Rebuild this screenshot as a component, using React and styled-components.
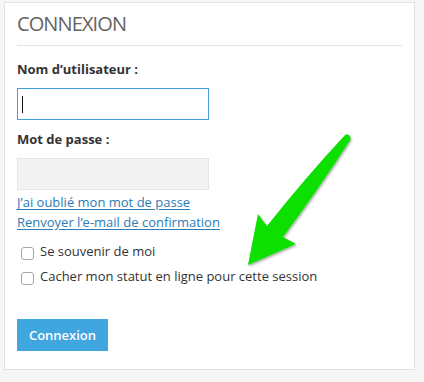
import React from "react";
import styled, { createGlobalStyle } from "styled-components";

const GlobalStyle = createGlobalStyle`
  html, body {
    margin: 0;
    padding: 0;
    background: #f6f6f6;
    font-family: "Open Sans", "Liberation Sans", sans-serif;
    color: #333;
  }
`;

const Page = styled.div`
  position: relative;
  width: 424px;
  height: 382px;
  padding: 2px 0 0 4px;
  box-sizing: border-box;
`;

const Card = styled.form`
  width: 411px;
  height: 368px;
  box-sizing: border-box;
  background: #fff;
  border: 1px solid #e2e2e2;
  padding: 8px 12px 0 12px;
  display: flex;
  flex-direction: column;
`;

const Title = styled.h2`
  margin: 0;
  font-size: 20px;
  font-weight: 400;
  line-height: 26px;
  letter-spacing: -0.9px;
  color: #636363;
  padding-bottom: 8px;
  border-bottom: 1px solid #e3e3e3;
`;

const Field = styled.div`
  display: flex;
  flex-direction: column;
  margin-top: ${(p) => p.$top}px;
`;

const Label = styled.label`
  font-size: 13px;
  font-weight: 700;
  line-height: 18px;
  color: #333;
`;

const Input = styled.div`
  width: 192px;
  height: 32px;
  box-sizing: border-box;
  margin-top: 10px;
  border: 1px solid ${(p) => (p.$focused ? "#3fa0dc" : "#e6e6e6")};
  background: ${(p) => (p.$focused ? "#fff" : "#f3f3f3")};
  display: flex;
  align-items: center;
  padding-left: 4px;
`;

const Caret = styled.span`
  width: 1px;
  height: 17px;
  background: #111;
`;

const Links = styled.div`
  display: flex;
  flex-direction: column;
  margin-top: 2px;
`;

const TextLink = styled.a`
  font-size: 13px;
  line-height: 20px;
  color: #2b7cb5;
  text-decoration: underline;
  text-underline-offset: 2px;
`;

const Options = styled.div`
  display: flex;
  flex-direction: column;
  gap: 7px;
  margin-top: 10px;
  padding-left: 4px;
`;

const Option = styled.label`
  display: flex;
  align-items: center;
  gap: 6px;
  font-size: 13px;
  line-height: 18px;
  color: #333;
`;

const Box = styled.span`
  width: 11px;
  height: 11px;
  margin-top: 4px;
  border: 1px solid #a8a8a8;
  border-radius: 3px;
  background: #fff;
  flex-shrink: 0;
`;

const Button = styled.button`
  margin-top: 34px;
  align-self: flex-start;
  width: 91px;
  height: 32px;
  border: none;
  background: #3fa6e0;
  color: #fff;
  font-family: "Open Sans", "Liberation Sans", sans-serif;
  font-size: 13px;
  font-weight: 600;
  padding: 0;
`;

const Arrow = styled.svg`
  position: absolute;
  left: 0;
  top: 0;
  pointer-events: none;
`;

export default function App() {
  return (
    <Page>
      <GlobalStyle />
      <Card onSubmit={(e) => e.preventDefault()}>
        <Title>CONNEXION</Title>
        <Field $top={14}>
          <Label>Nom d’utilisateur :</Label>
          <Input $focused>
            <Caret />
          </Input>
        </Field>
        <Field $top={10}>
          <Label>Mot de passe :</Label>
          <Input />
        </Field>
        <Links>
          <TextLink href="#">J’ai oublié mon mot de passe</TextLink>
          <TextLink href="#">Renvoyer l’e-mail de confirmation</TextLink>
        </Links>
        <Options>
          <Option>
            <Box />
            Se souvenir de moi
          </Option>
          <Option>
            <Box />
            Cacher mon statut en ligne pour cette session
          </Option>
        </Options>
        <Button type="submit">Connexion</Button>
      </Card>
      <Arrow width="424" height="382" viewBox="0 0 424 382">
        <defs>
          <filter id="sh" x="-20%" y="-20%" width="140%" height="140%">
            <feDropShadow dx="1" dy="1.5" stdDeviation="1.2" floodColor="#000" floodOpacity="0.35" />
          </filter>
        </defs>
        <path
          d="M345.5,134.5 Q305,178 267,226 L258,214 L248,265 L296,244 L283,237 Q318,190 350.5,139.5 Q351,134 345.5,134.5 Z"
          fill="#08e000"
          filter="url(#sh)"
        />
      </Arrow>
    </Page>
  );
}
